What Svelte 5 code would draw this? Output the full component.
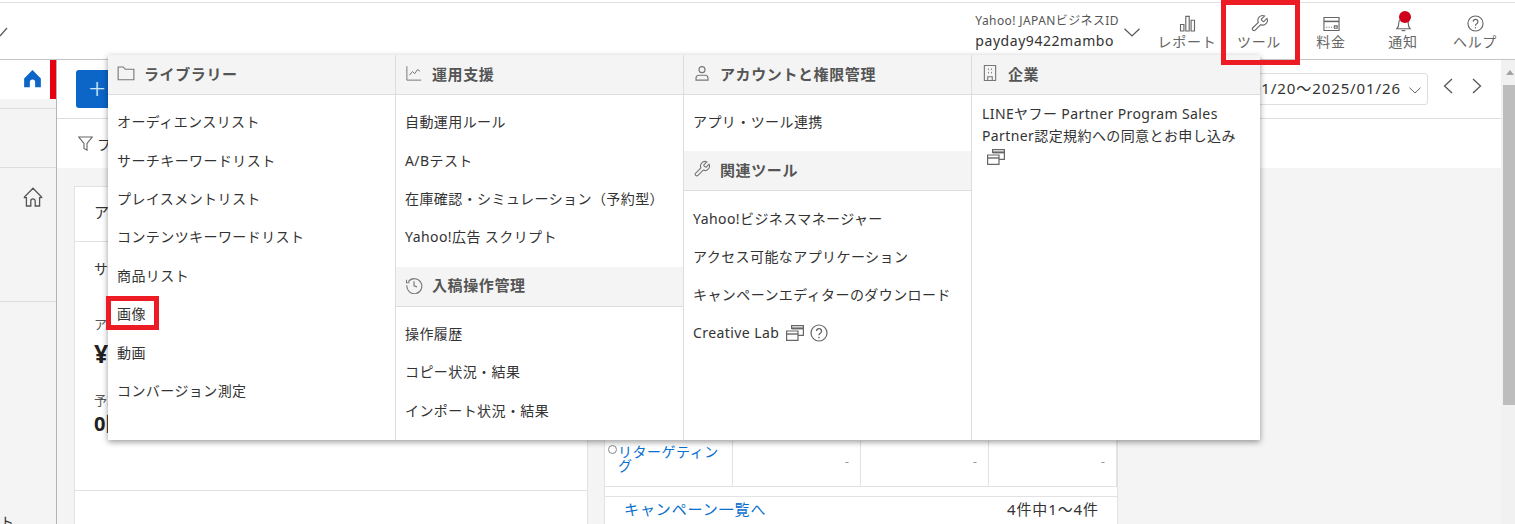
<script>
  const columns = [
    { sections: [{ icon: 'folder', title: 'ライブラリー', items: ['オーディエンスリスト', 'サーチキーワードリスト', 'プレイスメントリスト', 'コンテンツキーワードリスト', '商品リスト', '画像', '動画', 'コンバージョン測定'] }] },
    { sections: [
      { icon: 'chart', title: '運用支援', items: ['自動運用ルール', 'A/Bテスト', '在庫確認・シミュレーション（予約型）', 'Yahoo!広告 スクリプト'] },
      { icon: 'clock', title: '入稿操作管理', items: ['操作履歴', 'コピー状況・結果', 'インポート状況・結果'] }
    ] },
    { sections: [
      { icon: 'user', title: 'アカウントと権限管理', items: ['アプリ・ツール連携'] },
      { icon: 'wrench', title: '関連ツール', items: ['Yahoo!ビジネスマネージャー', 'アクセス可能なアプリケーション', 'キャンペーンエディターのダウンロード', 'Creative Lab'] }
    ] }
  ];
</script>

{#snippet icon(name)}
  <svg class="ic" viewBox="0 0 24 24" fill="none" stroke="currentColor" stroke-width="1.5">
    {#if name === 'folder'}
      <path d="M1.5 4h7l2.5 3h11.500v14h-21z" />
    {:else if name === 'chart'}
      <path d="M2.500 3v18.500h19" stroke-width="1.300" /><path d="M6 15l4-5 3 3 3.500-5.500 3.500 2" stroke-width="1.300" />
    {:else if name === 'clock'}
      <path d="M4.500 7.500a10 10 0 1 1-2 5" /><path d="M2 5v4h4" stroke-width="1.400" /><path d="M12 7v6l4 1.500" />
    {:else if name === 'user'}
      <circle cx="12" cy="7.500" r="4" /><path d="M4 21.500v-2.500a4 4 0 0 1 4-4h8a4 4 0 0 1 4 4v2.500z" />
    {:else if name === 'wrench'}
      <path d="M14.700 6.300a1 1 0 0 0 0 1.400l1.600 1.600a1 1 0 0 0 1.400 0l3.770-3.770a6 6 0 0 1-7.940 7.940l-6.910 6.910a2.120 2.120 0 0 1-3-3l6.910-6.910a6 6 0 0 1 7.940-7.940l-3.760 3.760z" />
    {:else if name === 'building'}
      <path d="M4.500 2h15v20h-15z" /><path d="M9 17h6v5H9z" /><path d="M10 6v2M14 6v2M10 10.500v2M14 10.500v2" stroke-width="1.200" />
    {/if}
  </svg>
{/snippet}

{#snippet external()}
  <svg class="ext" viewBox="0 0 18 16" fill="none" stroke="#666" stroke-width="1.200">
    <path d="M5.600 4V.6h11.800v9.800H12" /><path d="M5.600 3.400h11.800" stroke-width="2" />
    <path d="M.6 6h11.400v9.400H.6z" /><path d="M.6 9h11.400" stroke-width="1.400" />
  </svg>
{/snippet}

{#snippet help()}
  <svg class="help" viewBox="0 0 18 18" fill="none" stroke="currentColor" stroke-width="1.200">
    <circle cx="9" cy="9" r="8" /><path d="M6.500 7a2.500 2.500 0 1 1 3.800 2.200c-.9.5-1.300 1-1.300 2.100" stroke-width="1.300" /><circle cx="9" cy="13.600" r=".8" fill="currentColor" stroke="none" />
  </svg>
{/snippet}

<div class="page">
  <header class="header">
    <svg class="stub" viewBox="0 0 8 10" fill="none" stroke="#555" stroke-width="1.200"><path d="M0 9l7-8" /></svg>
    <div class="account">
      <div class="acc-text">
        <span class="acc-label">Yahoo! JAPANビジネスID</span>
        <span class="acc-name">payday9422mambo</span>
      </div>
      <svg class="acc-chev" viewBox="0 0 16 9" fill="none" stroke="#555" stroke-width="1.200"><path d="M.5.8L8 8l7.500-7.200" /></svg>
    </div>
    <nav class="nav">
      <div class="nav-item">
        <svg class="nav-ic" viewBox="0 0 18 18" fill="none" stroke="currentColor" stroke-width="1.200"><path d="M1.600 10h3.600v7H1.600zM7.200 1.500h3.600V17H7.200zM12.800 5.500h3.600V17h-3.600z" /></svg>
        <span>レポート</span>
      </div>
      <div class="nav-item tool">
        <svg class="nav-ic wr" viewBox="0 0 24 24" fill="none" stroke="currentColor" stroke-width="1.400"><path d="M14.700 6.300a1 1 0 0 0 0 1.400l1.600 1.600a1 1 0 0 0 1.400 0l3.770-3.770a6 6 0 0 1-7.940 7.940l-6.910 6.910a2.120 2.120 0 0 1-3-3l6.910-6.910a6 6 0 0 1 7.940-7.940l-3.760 3.760z" /></svg>
        <span>ツール</span>
      </div>
      <div class="nav-item">
        <svg class="nav-ic" viewBox="0 0 18 18" fill="none" stroke="currentColor" stroke-width="1.200"><path d="M1 2.600h16v13.800H1z" /><path d="M1 6.800h16" stroke-width="1.600" /><path d="M3.500 13h1M6 13h1M8.500 13h1" /><path d="M12 11.500h3v2.500h-3z" /></svg>
        <span>料金</span>
      </div>
      <div class="nav-item">
        <svg class="nav-ic" viewBox="0 0 18 18" fill="none" stroke="currentColor" stroke-width="1.200"><path d="M2 14.500c1.500-1.500 2-3 2-6a5 5 0 0 1 10 0c0 3 .5 4.500 2 6z" /><path d="M7 16.500h4" /></svg>
        <span class="dot"></span>
        <span>通知</span>
      </div>
      <div class="nav-item">
        <span class="nav-help">{@render help()}</span>
        <span>ヘルプ</span>
      </div>
    </nav>
  </header>

  <div class="body">
    <aside class="side">
      <div class="tab">
        <svg class="home" viewBox="0 0 20 20" fill="#0b66c8"><path d="M10 1L1.200 10v9.200h6v-5.400a2.800 2.800 0 0 1 5.600 0v5.400h6V10z" /></svg>
      </div>
      <div class="s-gap"></div>
      <div class="s-mid"></div>
      <div class="s-nav">
        <svg class="home2" viewBox="0 0 20 20" fill="none" stroke="#555" stroke-width="1.300"><path d="M10 1.200L1.400 10v.6h2v8.400h4.400v-5a2.200 2.200 0 0 1 4.400 0v5h4.400v-8.400h2V10z" /></svg>
      </div>
      <div class="s-rest"><span>ト</span></div>
    </aside>

    <main class="main">
      <div class="toolbar">
        <button class="add"><span>+</span></button>
        <div class="range">
          <div class="date">
            <span>2025/01/20～2025/01/26</span>
            <svg viewBox="0 0 12 7" fill="none" stroke="#666" stroke-width="1"><path d="M.5.7L6 6l5.500-5.300" /></svg>
          </div>
          <svg class="arrow" viewBox="0 0 10 16" fill="none" stroke="#555" stroke-width="1.300"><path d="M9 1L1.500 8 9 15" /></svg>
          <svg class="arrow" viewBox="0 0 10 16" fill="none" stroke="#555" stroke-width="1.300"><path d="M1 1l7.500 7L1 15" /></svg>
        </div>
      </div>
      <div class="filter">
        <svg class="funnel" viewBox="0 0 15 15" fill="none" stroke="#666" stroke-width="1.100"><path d="M.8 1h13.400L9 7.500v6.700L6 12.500v-5z" /></svg>
        <span>フィルター</span>
      </div>
      <div class="content">
        <section class="card left">
          <h2 class="card-title">アカウント情報</h2>
          <div class="card-body">
            <p class="sub">サマリー</p>
            <p class="cap">アカウント残高</p>
            <p class="amt">¥0</p>
            <p class="cap budget">予算</p>
            <p class="num">0円</p>
          </div>
          <div class="card-foot"></div>
        </section>
        <section class="card right">
          <div class="spacer"></div>
          <div class="row">
            <div class="cell first"><i class="radio"></i><a href="#r">リターゲティング</a></div>
            <div class="cell">-</div>
            <div class="cell">-</div>
            <div class="cell">-</div>
          </div>
          <div class="r-foot">
            <a href="#c">キャンペーン一覧へ</a>
            <span>4件中1～4件</span>
          </div>
        </section>
      </div>
    </main>

    <div class="scroll">
      <i class="up"></i>
      <div class="thumb"></div>
    </div>
  </div>

  <div class="menu">
    {#each columns as col}
      <div class="col">
        {#each col.sections as sec}
          <div class="sec-head">{@render icon(sec.icon)}<span>{sec.title}</span></div>
          <ul class="items">
            {#each sec.items as it}
              <li>
                {#if it === '画像'}
                  <span class="hl">{it}</span>
                {:else}
                  <span>{it}</span>
                {/if}
                {#if it === 'Creative Lab'}
                  {@render external()}
                  <span class="q">{@render help()}</span>
                {/if}
              </li>
            {/each}
          </ul>
        {/each}
      </div>
    {/each}
    <div class="col last">
      <div class="sec-head">{@render icon('building')}<span>企業</span></div>
      <div class="corp">
        LINEヤフー Partner Program Sales<br />Partner認定規約への同意とお申し込み<br />
        {@render external()}
      </div>
    </div>
  </div>
</div>

<style>
  :global(body) { margin: 0; }
  .page {
    position: relative;
    width: 1515px;
    height: 524px;
    overflow: hidden;
    display: flex;
    flex-direction: column;
    background: #fff;
    color: #333;
    font-family: "Noto Sans", "Noto Sans CJK JP", sans-serif;
    font-size: 14px;
  }
  p, h2, ul { margin: 0; padding: 0; }

  .header {
    box-sizing: border-box;
    flex: none;
    margin-top: 2px;
    border-top: 1px solid #e2e2e2;
    border-bottom: 1px solid #c4c4c4;
    display: flex;
    align-items: stretch;
    justify-content: space-between;
    padding-right: 4px;
    height: 58px;
  }
  .stub { width: 8px; height: 10px; margin-top: 24px; }
  .account { display: flex; margin-left: auto; }
  .acc-text { display: flex; flex-direction: column; padding-top: 8px; }
  .acc-label { font-size: 12px; line-height: 20px; letter-spacing: .4px; color: #555; }
  .acc-name { font-size: 14px; line-height: 19px; letter-spacing: .55px; color: #333; }
  .acc-chev { width: 16px; height: 9px; margin: 25px 11px 0 5px; }
  .nav { display: flex; }
  .nav-item {
    position: relative;
    width: 72px;
    display: flex;
    flex-direction: column;
    align-items: center;
    color: #666;
    letter-spacing: .7px;
    line-height: 20px;
    padding-top: 12px;
    box-sizing: border-box;
  }
  .nav-ic, .nav-help :global(.help) { width: 17px; height: 17px; display: block; }
  .nav-ic.wr { width: 19px; height: 19px; margin: -1px 0 -1px; }
  .nav-help { height: 17px; }
  .tool::after {
    content: "";
    position: absolute;
    left: -2px;
    top: -3px;
    width: 69px;
    height: 55px;
    border: 5px solid #ed1c24;
    z-index: 10;
  }
  .dot {
    position: absolute;
    left: 32px;
    top: 8px;
    width: 12px;
    height: 12px;
    border-radius: 50%;
    background: #d0021b;
  }

  .body { flex: 1; display: flex; min-height: 0; }
  .side {
    width: 57px;
    flex: none;
    box-sizing: border-box;
    border-right: 1px solid #b5b5b5;
    background: #f4f4f4;
    display: flex;
    flex-direction: column;
  }
  .tab {
    height: 39px;
    flex: none;
    box-sizing: border-box;
    background: #fff;
    border-right: 6px solid #e60012;
    display: flex;
    justify-content: flex-end;
    padding: 9px 8px 0 0;
  }
  .home { width: 19px; height: 19px; }
  .s-gap { height: 9px; border-bottom: 1px solid #ddd; }
  .s-mid { height: 58px; border-bottom: 1px solid #ddd; }
  .s-nav { height: 134px; border-bottom: 1px solid #ddd; padding: 19px 0 0 23px; box-sizing: border-box; }
  .home2 { width: 20px; height: 20px; }
  .s-rest { flex: 1; position: relative; overflow: hidden; }
  .s-rest span { display: block; margin: 209px 0 0 0; }

  .main { flex: 1; min-width: 0; display: flex; flex-direction: column; }
  .toolbar {
    height: 59px;
    flex: none;
    box-sizing: border-box;
    border-bottom: 1px solid #ddd;
    display: flex;
    align-items: flex-start;
    justify-content: space-between;
    padding: 10px 19px 0 19px;
  }
  .add {
    width: 60px;
    height: 38px;
    border: 0;
    border-radius: 3px;
    background: #0b66c8;
    color: #cfe3f8;
    font: 300 30px/36px "Noto Sans", sans-serif;
    padding: 0 18px 2px 0;
  }
  .range { display: flex; align-items: center; gap: 19px; margin-top: 3px; }
  .date {
    box-sizing: border-box;
    height: 32px;
    border: 1px solid #ddd;
    border-radius: 3px;
    display: flex;
    align-items: center;
    gap: 8px;
    padding: 0 6px 3px 8px;
    font-size: 15px;
    letter-spacing: .9px;
    color: #333;
    margin-right: -4px;
  }
  .date svg { width: 12px; height: 7px; margin-top: 5px; }
  .arrow { width: 10px; height: 16px; margin-top: -6px; }
  .filter {
    height: 49px;
    flex: none;
    display: flex;
    align-items: center;
    gap: 4px;
    padding-left: 21px;
    box-sizing: border-box;
  }
  .funnel { width: 15px; height: 15px; }
  .content {
    flex: 1;
    min-height: 0;
    background: #f4f4f4;
    display: flex;
    gap: 16px;
    padding: 18px 0 0 17px;
    align-items: stretch;
  }
  .card {
    background: #fff;
    border: 1px solid #e2e2e2;
    border-bottom: 0;
    box-sizing: border-box;
    display: flex;
    flex-direction: column;
  }
  .left { width: 514px; }
  .right { width: 514px; }
  .card-title {
    height: 55px;
    flex: none;
    box-sizing: border-box;
    border-bottom: 1px solid #e2e2e2;
    padding: 15px 0 0 19px;
    font-size: 15px;
    font-weight: 400;
    line-height: 20px;
  }
  .card-body { height: 249px; flex: none; box-sizing: border-box; padding: 17px 0 0 19px; border-bottom: 1px solid #e2e2e2; }
  .sub { line-height: 20px; }
  .cap { font-size: 13px; line-height: 18px; color: #555; margin-top: 36px; }
  .amt { font-size: 25px; font-weight: 700; line-height: 36px; margin-top: 2px; color: #222; }
  .budget { margin-top: 20px; }
  .num { font-size: 20px; font-weight: 700; line-height: 26px; margin-top: 2px; color: #222; }
  .card-foot { flex: 1; }

  .spacer { height: 254px; flex: none; }
  .row {
    display: grid;
    grid-template-columns: 128px 128px 128px 128px;
    height: 46px;
    flex: none;
    border-bottom: 1px solid #e2e2e2;
    box-sizing: border-box;
  }
  .cell {
    border-right: 1px solid #e2e2e2;
    box-sizing: border-box;
    text-align: right;
    padding: 10px 11px 0 0;
    color: #999;
    font-size: 13px;
    line-height: 20px;
  }
  .cell.first { position: relative; text-align: left; padding: 4px 8px 0 13px; line-height: 14px; font-size: 14px; letter-spacing: .5px; }
  .cell a, .r-foot a { color: #0b6fce; text-decoration: none; }
  .radio {
    position: absolute;
    left: 3px;
    top: 4px;
    width: 7px;
    height: 7px;
    border: 1px solid #888;
    border-radius: 50%;
  }
  .r-foot {
    margin-top: 9px;
    border-top: 1px solid #e2e2e2;
    display: flex;
    justify-content: space-between;
    padding: 0 18px 0 19px;
    line-height: 24px;
    font-size: 15px;
    letter-spacing: .9px;
  }

  .scroll {
    width: 14px;
    flex: none;
    background: #f1f1f1;
    box-sizing: border-box;
    padding: 10px 0 0 2px;
    position: relative;
  }
  .up {
    display: block;
    width: 0;
    height: 0;
    margin: 0 0 10px 3px;
    border-left: 4px solid transparent;
    border-right: 4px solid transparent;
    border-bottom: 5px solid #a3a3a3;
  }
  .thumb { height: 320px; background: #bdbdbd; }

  .menu {
    position: absolute;
    left: 108px;
    top: 55px;
    width: 1152px;
    height: 385px;
    background: #fff;
    display: grid;
    grid-template-columns: repeat(4, 288px);
    box-shadow: 0 2px 6px rgba(0, 0, 0, .4);
    z-index: 5;
  }
  .col { border-right: 1px solid #ddd; box-sizing: border-box; }
  .col.last { border-right: 0; }
  .sec-head {
    height: 40px;
    box-sizing: border-box;
    background: #f4f4f4;
    border-bottom: 1px solid #ddd;
    display: flex;
    align-items: center;
    padding: 0 0 3px 9px;
    gap: 9px;
    font-size: 15px;
    font-weight: 700;
    letter-spacing: .6px;
    color: #555;
  }
  .ic { width: 18px; height: 18px; color: #777; flex: none; }
  .items { list-style: none; padding: 7px 0 11px; }
  .items li {
    height: 38.400px;
    display: flex;
    align-items: center;
    padding-left: 9px;
    letter-spacing: .42px;
    white-space: nowrap;
    color: #333;
  }
  .hl { outline: 5px solid #ed1c24; padding: 2px 8px 2px 6px; margin-left: -6px; }
  .ext { width: 18px; height: 16px; color: #666; margin-left: 7px; flex: none; }
  .q { color: #666; margin-left: 6px; display: flex; }
  .q :global(.help) { width: 18px; height: 18px; }
  .corp { padding: 8px 0 0 10px; line-height: 22px; letter-spacing: .4px; color: #333; }
  .corp :global(.ext) { margin-left: 5px; vertical-align: -2px; }
</style>
